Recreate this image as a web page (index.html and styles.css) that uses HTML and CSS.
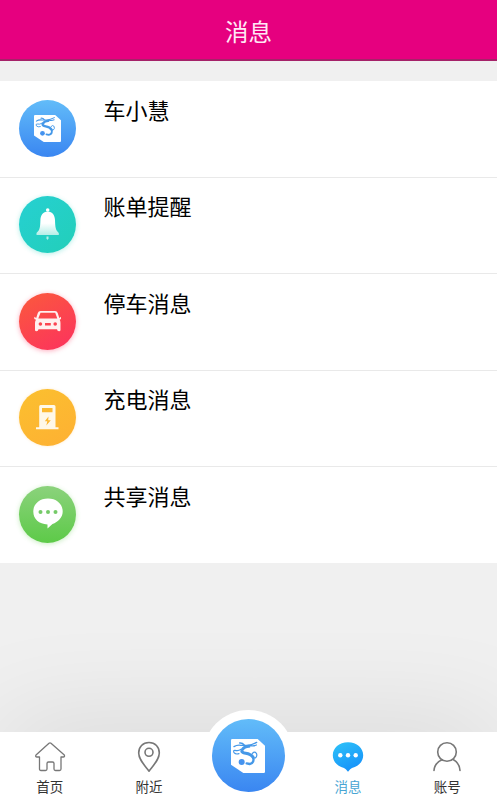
FILE: index.html
```html
<!DOCTYPE html>
<html lang="zh-CN">
<head>
<meta charset="utf-8">
<title>消息</title>
<link rel="stylesheet" href="styles.css">
</head>
<body>
<svg class="defs" aria-hidden="true">
  <symbol id="dragon" viewBox="0 0 102 102">
    <path fill="#fff" d="M4 0H80L102 20V98Q102 102 98 102H37L0 77V4Q0 0 4 0Z"/>
    <g fill="none" stroke="#4598e8" stroke-linecap="round" stroke-linejoin="round">
      <path stroke-width="4" d="M9 23Q18 17 30 19L48 19Q62 18 77 10M26 12Q34 11 40 18M58 20Q68 22 76 18"/>
      <path stroke-width="9" d="M54 22Q40 22 33 33Q30 41 44 43Q60 45 67 56"/>
      <path stroke-width="7" d="M67 57Q70 72 56 75L47 73"/>
      <path stroke-width="3.500" d="M30 31Q22 37 12 34Q6 33 9 41Q14 47 24 44M63 45Q70 35 76 43Q80 51 73 57"/>
    </g>
    <circle cx="32" cy="69" r="9" fill="#4593ef"/>
  </symbol>
</svg>
<div class="app">
  <header class="header"><h1>消息</h1></header>
  <main class="list">
    <div class="row">
      <span class="badge blue"><svg class="tile"><use href="#dragon"/></svg></span>
      <span class="name">车小慧</span>
    </div>
    <div class="row">
      <span class="badge teal">
        <svg viewBox="0 0 57 57">
          <defs><linearGradient id="bell" x2="0" y2="1"><stop offset=".5" stop-color="#fff"/><stop offset="1" stop-color="#b5eee7"/></linearGradient></defs>
          <circle cx="28.700" cy="14" r="1.800" fill="#fff"/>
          <path fill="url(#bell)" d="M28.700 15.500C33.500 16 35.800 19 36 24C36.200 31 36.500 34 39.800 37V39H17.500V37C21 34 21.200 31 21.400 24C21.600 19 24 16 28.700 15.500Z"/>
          <path fill="#b5eee7" d="M27.500 40.500H29.500V42.500L28.500 44L27.500 42.500Z"/>
        </svg>
      </span>
      <span class="name">账单提醒</span>
    </div>
    <div class="row">
      <span class="badge red">
        <svg viewBox="0 0 57 57">
          <path fill="#fff0ee" fill-rule="evenodd" d="M21.500 18H36Q38 18 38.700 20L40.300 25L42 23.800V26L40.700 26.800Q41.500 28 41.500 30V37Q41.500 38.300 40 38.300Q38.200 38.300 38 36.200H19.500Q19.200 38.300 17.500 38.300Q16 38.300 16 37V30Q16 28 17 26.800L15.300 26V23.800L17.200 25L18.800 20Q19.500 18 21.500 18ZM21.500 19.800L19.300 25.400H38.300L36.200 19.800ZM21.400 29.200A1.800 1.800 0 1 0 21.400 32.800A1.800 1.800 0 1 0 21.400 29.200ZM36.200 29.200A1.800 1.800 0 1 0 36.200 32.800A1.800 1.800 0 1 0 36.200 29.200ZM26 30V32.500H31.800V30Z"/>
        </svg>
      </span>
      <span class="name">停车消息</span>
    </div>
    <div class="row">
      <span class="badge amber">
        <svg viewBox="0 0 57 57">
          <path fill="#fff8e8" fill-rule="evenodd" d="M21.500 16H35Q36.500 16 36.500 17.500V38.200H39.500V40.300H17V38.200H20.200V17.500Q20.200 16 21.500 16ZM23 19V23.200H33.500V19ZM29.500 27.500L25.800 32.300H28.300L27.300 36.500L31.800 31.200H29.200Z"/>
        </svg>
      </span>
      <span class="name">充电消息</span>
    </div>
    <div class="row">
      <span class="badge green">
        <svg viewBox="0 0 57 57">
          <path fill="#fff" d="M29 12.500C37.500 12.500 43.700 18 43.700 25.500C43.700 31.500 39 36 33.500 38L28.500 42.500V38.500C20 38 14.300 33 14.300 25.500C14.300 18 20.500 12.500 29 12.500Z"/>
          <g fill="#75ca68"><circle cx="21.500" cy="26" r="2"/><circle cx="29" cy="26" r="2"/><circle cx="36.500" cy="26" r="2"/></g>
        </svg>
      </span>
      <span class="name">共享消息</span>
    </div>
  </main>
  <div class="space"></div>
  <nav class="dock">
    <a class="tab">
      <svg viewBox="0 0 32 32" fill="none" stroke="#777" stroke-width="1.300" stroke-linejoin="round"><path d="M15 2.300Q16 1.500 17 2.300L30.300 14Q31 15.800 29.300 16H27V28Q27 29.500 25.500 29.500H21.500Q20 29.500 20 28V22.500Q20 21 18.500 21H14.500Q13 21 13 22.500V28Q13 29.500 11.500 29.500H7Q5.500 29.500 5.500 28V16H3Q1 15.800 2 14Z"/></svg>
      <span>首页</span>
    </a>
    <a class="tab">
      <svg viewBox="0 0 32 32" fill="none" stroke="#777" stroke-width="1.600" stroke-linejoin="round"><path d="M16 1.500C22.200 1.500 26.300 6 26.300 12C26.300 18 21.500 23 16 30.200C10.500 23 5.700 18 5.700 12C5.700 6 9.800 1.500 16 1.500Z"/><circle cx="16" cy="11.300" r="4"/></svg>
      <span>附近</span>
    </a>
    <a class="tab">
      <span class="halo"><span class="hub blue"><svg class="tile"><use href="#dragon"/></svg></span></span>
    </a>
    <a class="tab active">
      <svg viewBox="0 0 32 32">
        <defs><linearGradient id="chat" x1=".2" x2=".7" y2="1"><stop stop-color="#2cc0f8"/><stop offset="1" stop-color="#1690fa"/></linearGradient></defs>
        <path fill="url(#chat)" d="M16 1.200C25 1.200 31.200 7 31.200 14.200C31.200 20.500 26.500 25.500 20 27Q18 28 16.700 30Q16 31 15.300 30Q14 28 12 27C5.500 25.500.800 20.500.800 14.200C.800 7 7 1.200 16 1.200Z"/>
        <g fill="#fff"><circle cx="8.300" cy="14.300" r="2.200"/><circle cx="16" cy="14.300" r="2.200"/><circle cx="23.700" cy="14.300" r="2.200"/></g>
      </svg>
      <span>消息</span>
    </a>
    <a class="tab">
      <svg viewBox="0 0 32 32" fill="none" stroke="#777" stroke-width="1.600" stroke-linecap="round"><circle cx="16" cy="11" r="9.300"/><path d="M3 29.500Q3.500 22 11 18.800M29 29.500Q28.500 22 22.500 18.800"/></svg>
      <span>账号</span>
    </a>
  </nav>
</div>
</body>
</html>
```
FILE: styles.css
```css
* {
  box-sizing: border-box;
}

body {
  margin: 0;
  font-family: "Noto Sans CJK SC", sans-serif;
  background: #f0f0f0;
}

.defs {
  display: block;
  width: 0;
  height: 0;
}

.app {
  display: flex;
  flex-direction: column;
  height: 800px;
  overflow: hidden;
}

.header {
  flex: none;
  height: 61px;
  padding-top: 3px;
  display: flex;
  align-items: center;
  justify-content: center;
  background: #e6007f;
  border-bottom: 2px solid #a52269;
}

.header h1 {
  margin: 0;
  font-size: 23.500px;
  font-weight: 400;
  line-height: 32px;
  color: #ffe9f5;
}

.list {
  flex: none;
  margin-top: 20px;
  background: #fff;
}

.row {
  display: flex;
  align-items: flex-start;
  gap: 27.500px;
  height: 96.500px;
  padding: 18.500px 19px 0;
  border-bottom: 1px solid #e9e9e9;
}

.row:last-child {
  height: 95.500px;
  border-bottom: 0;
}

.badge {
  flex: none;
  display: grid;
  place-items: center;
  width: 57px;
  height: 57px;
  border-radius: 50%;
}

.badge svg {
  width: 57px;
  height: 57px;
}

.badge .tile {
  width: 27px;
  height: 27px;
}

.name {
  margin-top: -7px;
  font-size: 22px;
  font-weight: 400;
  line-height: 32px;
  color: #000;
}

.blue {
  background: linear-gradient(#62bcf9, #3a86f1);
}

.teal {
  background: linear-gradient(135deg, #26d0d2, #22cfb9);
  box-shadow: 0 1px 5px #22cfb955;
}

.red {
  background: linear-gradient(150deg, #fb5a3c, #fc315f);
  box-shadow: 0 1px 5px #fc315f66;
}

.amber {
  background: linear-gradient(150deg, #fbc02f, #feb033);
  box-shadow: 0 0 3px #feb03344;
}

.green {
  background: linear-gradient(#8bd27c, #5dca48);
  box-shadow: 0 1px 5px #5dca4855;
}

.space {
  flex: 1;
}

.dock {
  position: relative;
  flex: none;
  display: grid;
  grid-template-columns: repeat(5, 1fr);
  height: 68px;
  background: #fff;
  box-shadow: 0 0 110px rgba(0, 0, 0, 0.130);
}

.tab {
  display: flex;
  flex-direction: column;
  align-items: center;
  padding-top: 9px;
  font-size: 13.500px;
  line-height: 20px;
  color: #333;
}

.tab > svg {
  width: 32px;
  height: 32px;
  margin-bottom: 3px;
}

.active {
  color: #48a5d3;
}

.halo {
  flex: none;
  display: grid;
  place-items: center;
  width: 91px;
  height: 91px;
  margin-top: -31px;
  border-radius: 50%;
  background: #fff;
}

.hub {
  display: grid;
  place-items: center;
  width: 73px;
  height: 73px;
  border-radius: 50%;
}

.hub .tile {
  width: 34px;
  height: 34px;
}
```
